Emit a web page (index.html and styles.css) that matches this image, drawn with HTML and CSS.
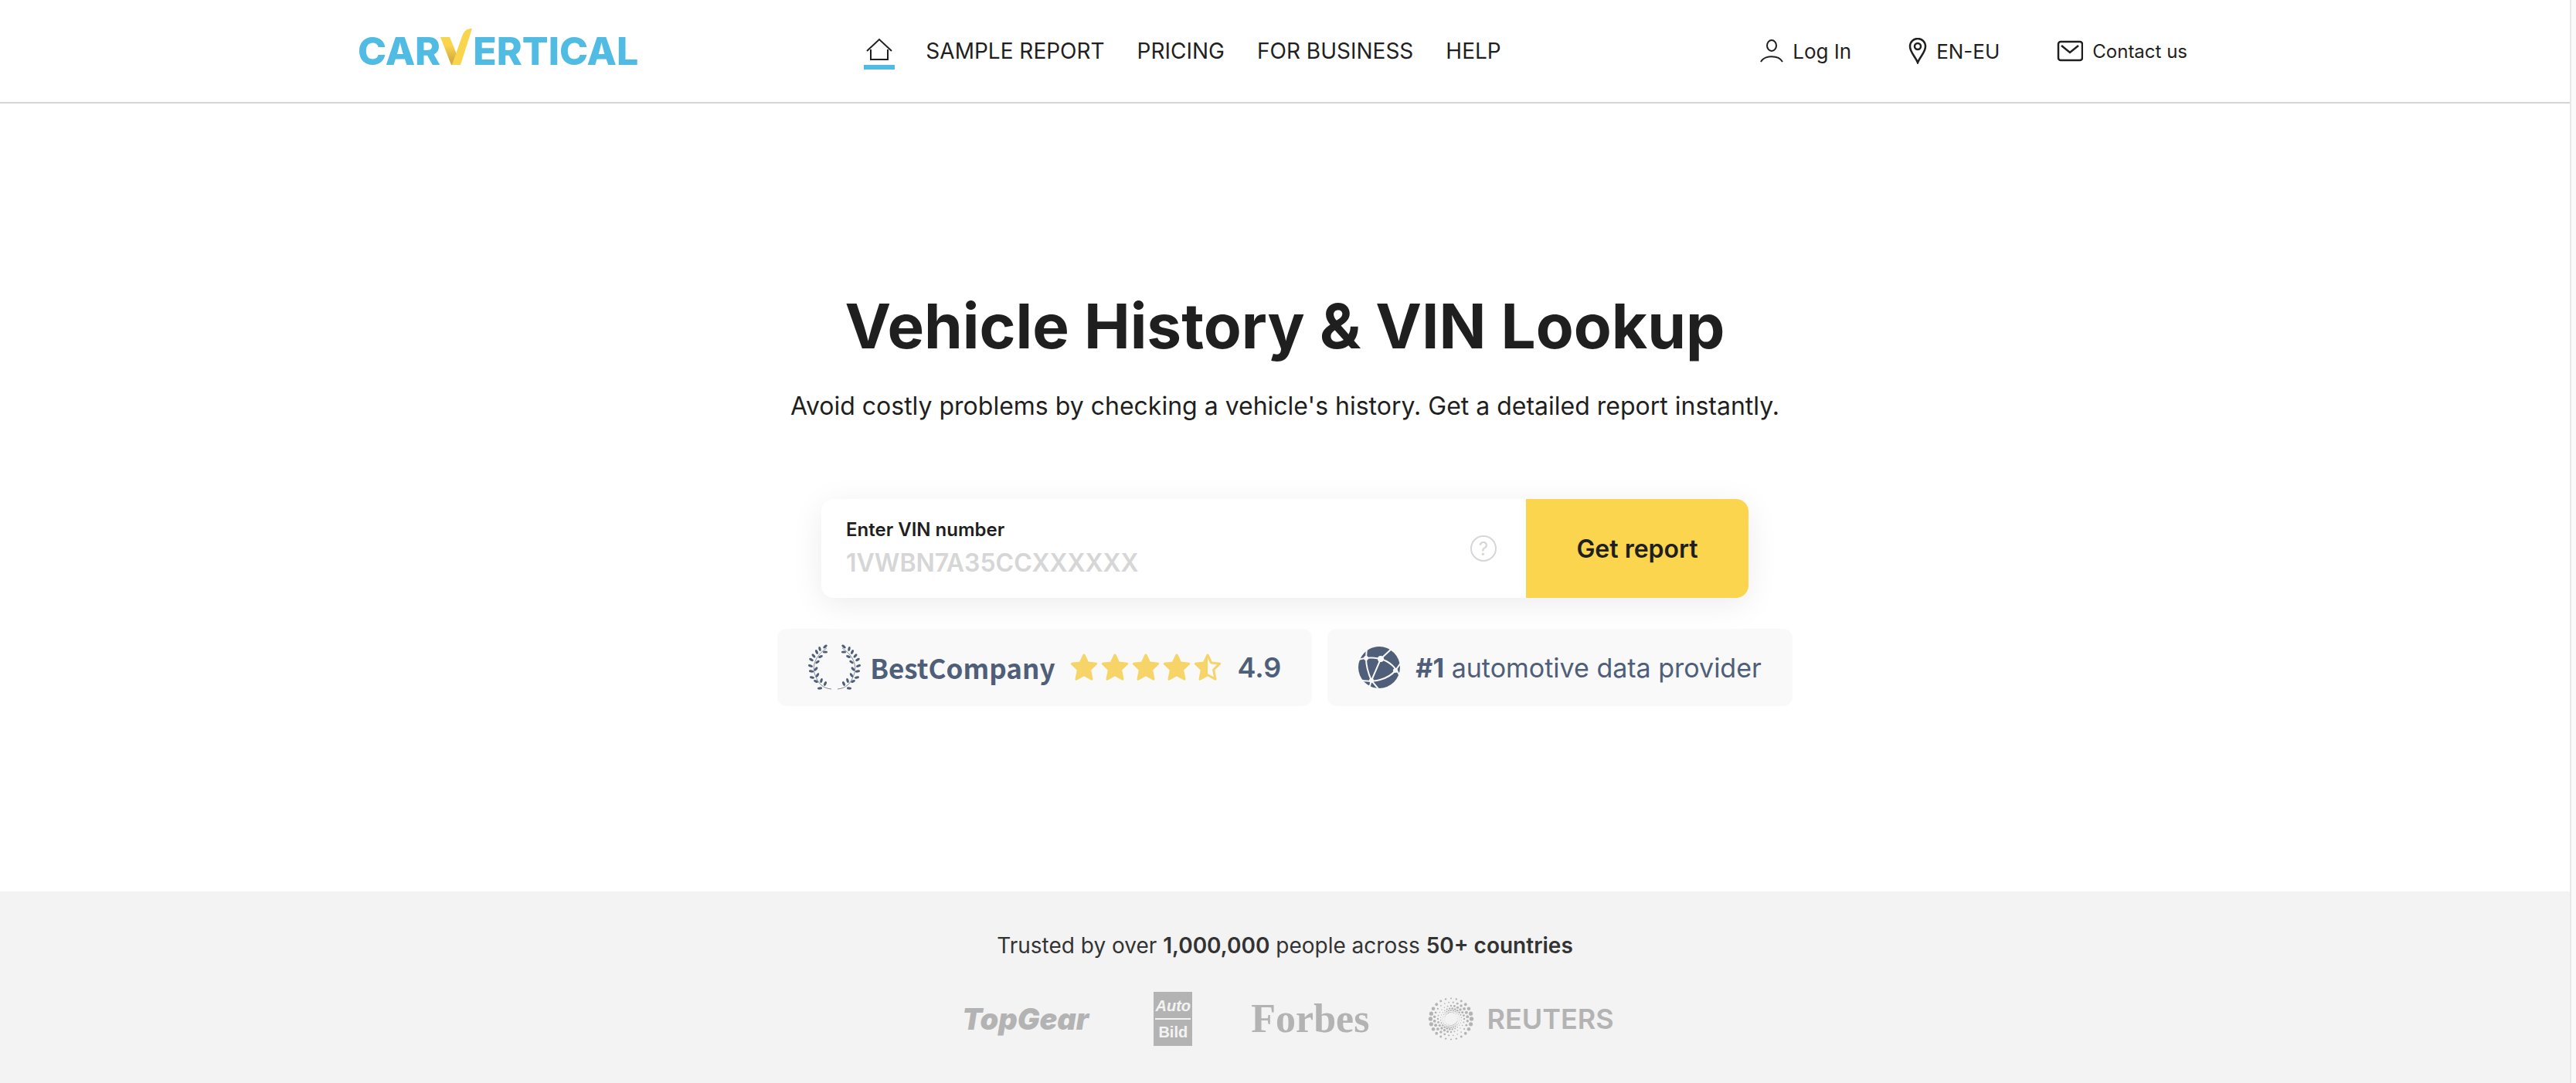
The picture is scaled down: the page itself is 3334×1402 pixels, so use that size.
FILE: index.html
```html
<!DOCTYPE html>
<html lang="en">
<head>
<meta charset="utf-8">
<meta name="viewport" content="width=device-width, initial-scale=1">
<title>Vehicle History &amp; VIN Lookup</title>
<link rel="stylesheet" href="styles.css">
</head>
<body>
<div class="page">
  <header class="header">
    <div class="header-inner">
      <a class="logo" href="#" aria-label="carVertical">
        <span>CAR</span>
        <svg class="logo-v" width="42" height="47" viewBox="0 0 42 47" aria-hidden="true">
          <defs><linearGradient id="shade" x1="0" y1="0" x2="0" y2="1"><stop offset="0.3" stop-color="#f9d54d"/><stop offset="0.8" stop-color="#d9ae3e"/></linearGradient></defs>
          <path fill="url(#shade)" d="M0 11h12l9 22-5 14h-2z"/>
          <path fill="#f9d54d" d="M15 47 28 10C31 2 35 0 41 0L26 47z"/>
        </svg>
        <span>ERTICAL</span>
      </a>
      <nav class="nav" aria-label="Main">
        <a class="home" href="#" aria-label="Home">
          <svg width="34" height="29" viewBox="0 0 34 29" fill="none" stroke="#1f1f1f" stroke-width="2" aria-hidden="true"><path d="M1 17 17 2l16 15M6 15v13h22V15"/></svg>
        </a>
        <div class="nav-links">
          <a href="#">SAMPLE REPORT</a>
          <a href="#">PRICING</a>
          <a href="#">FOR BUSINESS</a>
          <a href="#">HELP</a>
        </div>
      </nav>
      <div class="tools">
        <a href="#"><svg width="30" height="30" viewBox="0 0 30 30" fill="none" stroke="#1f1f1f" stroke-width="2" aria-hidden="true"><ellipse cx="15" cy="8" rx="6" ry="7"/><path d="M1 29c5-9 23-9 28 0"/></svg>Log In</a>
        <a href="#"><svg width="24" height="34" viewBox="0 0 24 34" fill="none" stroke="#1f1f1f" stroke-width="2.5" aria-hidden="true"><path d="M12 32C9 24 2 19 2 11a10 10 0 0 1 20 0c0 8-7 13-10 21z"/><circle cx="12" cy="11" r="4"/></svg>EN-EU</a>
        <a class="contact" href="#"><svg width="34" height="28" viewBox="0 0 34 28" fill="none" stroke="#1f1f1f" stroke-width="2.5" aria-hidden="true"><rect x="2" y="2" width="31" height="24" rx="3"/><path d="m6 7 11 9 11-9"/></svg>Contact us</a>
      </div>
    </div>
  </header>

  <main class="hero">
    <h1>Vehicle History &amp; VIN Lookup</h1>
    <p class="lead">Avoid costly problems by checking a vehicle's history. Get a detailed report instantly.</p>
    <form class="lookup">
      <div class="field">
        <div class="field-text">
          <label for="vin">Enter VIN number</label>
          <input id="vin" type="text" placeholder="1VWBN7A35CCXXXXXX">
        </div>
        <button class="help" type="button" aria-label="Where to find the VIN">?</button>
      </div>
      <button class="submit" type="submit">Get report</button>
    </form>
    <div class="badges">
      <div class="badge">
        <svg class="laurel" width="68" height="60" viewBox="0 0 68 60" fill="#4f5f7a" aria-hidden="true">
          <defs>
            <ellipse id="leaf" rx="3.1" ry="1.6"/>
            <g id="branch">
              <path d="M24 5C10 14 4 28 9 40c4 11 10 17 21 18" fill="none" stroke="#4f5f7a" stroke-width="0.7"/>
              <use href="#leaf" transform="translate(22 3) rotate(-40)"/>
              <use href="#leaf" transform="translate(15 6) rotate(80)"/>
              <use href="#leaf" transform="translate(11 10) rotate(65)"/>
              <use href="#leaf" transform="translate(7 15) rotate(50)"/>
              <use href="#leaf" transform="translate(4 20) rotate(30)"/>
              <use href="#leaf" transform="translate(3 28) rotate(20)"/>
              <use href="#leaf" transform="translate(4 35) rotate(10)"/>
              <use href="#leaf" transform="translate(5 43) rotate(15)"/>
              <use href="#leaf" transform="translate(10 48) rotate(25)"/>
              <use href="#leaf" transform="translate(15 57) rotate(-5)"/>
              <use href="#leaf" transform="translate(22 10)"/>
              <use href="#leaf" transform="translate(16 16) rotate(-25)"/>
              <use href="#leaf" transform="translate(12 23) rotate(-35)"/>
              <use href="#leaf" transform="translate(10 32) rotate(-50)"/>
              <use href="#leaf" transform="translate(12 40) rotate(-60)"/>
              <use href="#leaf" transform="translate(17 47) rotate(-75)"/>
              <use href="#leaf" transform="translate(22 51) rotate(-65)"/>
            </g>
          </defs>
          <use href="#branch"/>
          <use href="#branch" transform="translate(68 0) scale(-1 1)"/>
        </svg>
        <span class="company">BestCompany</span>
        <svg class="stars" width="196" height="36" viewBox="0 0 196 36" fill="#f6d468" stroke="#f6d468" stroke-width="3" stroke-linejoin="round" role="img" aria-label="4.5 stars">
          <defs><path id="star" d="M18 2l4.700 10 11 1.200-8.100 7.800 2.400 12.300L18 27.800l-10 5.500 2.400-12.300-8.100-7.800 11-1.200z"/></defs>
          <use href="#star"/>
          <use href="#star" x="40"/>
          <use href="#star" x="80"/>
          <use href="#star" x="120"/>
          <use href="#star" x="160" fill="none"/>
          <path d="M178 2l-4.700 10-11 1.200 8.100 7.800-2.400 12.300 10-5.500z" stroke="none"/>
        </svg>
        <span class="score">4.9</span>
      </div>
      <div class="badge">
        <svg width="54" height="54" viewBox="0 0 54 54" aria-hidden="true">
          <circle cx="27" cy="27" r="27" fill="#4f5f7a"/>
          <g fill="none" stroke="#f9f9f9" stroke-width="2">
            <path d="M0 17C10 14 20 14 29 16c11 3 21 12 25 23M11 1 10 15c0 12 3 20 7 29M29 16 17 44M29 16 44 2M0 43c20 5 39-1 48-12l7-10M17 44l-3 10M17 44l10 12"/>
          </g>
          <g fill="#f9f9f9"><circle cx="10" cy="15" r="3"/><circle cx="29" cy="16" r="4"/><circle cx="48" cy="31" r="3"/><circle cx="17" cy="44" r="3"/></g>
        </svg>
        <span class="claim"><b>#1</b> automotive data provider</span>
      </div>
    </div>
  </main>

  <section class="trusted">
    <p>Trusted by over <b>1,000,000</b> people across <b>50+ countries</b></p>
    <div class="press">
      <span class="topgear">TopGear</span>
      <span class="autobild"><i>Auto</i><span>Bild</span></span>
      <span class="forbes">Forbes</span>
      <span class="reuters">
        <svg id="reuters-dots" width="60" height="60" viewBox="-30 -30 60 60" fill="#b3b3b3" aria-hidden="true"></svg>
        REUTERS
      </span>
    </div>
  </section>
</div>
<div class="track"></div>
<script src="dots.js"></script>
</body>
</html>
```
FILE: styles.css
```css
* { box-sizing: border-box; }

body {
  margin: 0;
  display: flex;
  min-height: 100vh;
  font-family: Inter, "Liberation Sans", sans-serif;
  color: #1f1f1f;
  background: #fff;
}

a { color: inherit; text-decoration: none; }
svg { flex: none; }

.page { flex: 1; display: flex; flex-direction: column; }
.track { width: 8px; border-left: 2px solid #e8e8e8; background: #fafafa; }

/* Header */
.header { border-bottom: 2px solid #d5d5d5; }
.header-inner {
  display: flex;
  align-items: center;
  max-width: 2400px;
  height: 132px;
  margin: 0 auto;
  padding-right: 32px;
}
.logo {
  display: flex;
  align-items: baseline;
  font-size: 50px;
  line-height: 60px;
  font-weight: 800;
  color: #50bbe3;
}
.nav { display: flex; align-items: center; gap: 40px; margin-left: 292px; font-size: 28px; }
.nav-links { display: flex; gap: 42px; }
.home {
  display: flex;
  justify-content: center;
  width: 40px;
  padding: 6px 0;
  border-bottom: 6px solid #50bbe3;
}
.tools { display: flex; align-items: center; gap: 74px; margin-left: auto; font-size: 26px; }
.tools a { display: flex; align-items: center; gap: 12px; }
.tools .contact { font-size: 24px; }

/* Hero */
.hero {
  display: flex;
  flex-direction: column;
  align-items: center;
  padding: 240px 0;
}
h1 { margin: 0 0 32px; font-size: 80px; line-height: 96px; font-weight: 700; }
.lead { margin: 0 0 96px; font-size: 32px; line-height: 48px; }

.lookup {
  display: flex;
  width: 100%;
  max-width: 1200px;
  height: 128px;
  margin-bottom: 40px;
  border-radius: 16px;
  background: #fff;
  box-shadow: 0 8px 40px rgba(0, 0, 0, 0.08);
  overflow: hidden;
}
.field { flex: 1; display: flex; align-items: center; padding: 0 38px 0 32px; }
.field-text { flex: 1; display: flex; flex-direction: column; }
label { font-size: 24px; line-height: 36px; font-weight: 600; }
input {
  width: 100%;
  height: 48px;
  padding: 0;
  border: 0;
  outline: 0;
  background: none;
  font: 600 32px Inter, "Liberation Sans", sans-serif;
  color: #1f1f1f;
}
input::placeholder { color: #d6d6d6; opacity: 1; }
.help {
  width: 34px;
  height: 34px;
  padding: 0;
  border: 2px solid #d6d6d6;
  border-radius: 50%;
  background: none;
  font: 24px Inter, "Liberation Sans", sans-serif;
  color: #d6d6d6;
}
.submit {
  width: 288px;
  border: 0;
  background: #fad54d;
  font: 600 32px Inter, "Liberation Sans", sans-serif;
  color: #1f1f1f;
}

.badges { display: flex; gap: 20px; }
.badge {
  display: flex;
  align-items: center;
  height: 100px;
  padding: 0 40px;
  border-radius: 12px;
  background: #f9f9f9;
  color: #4f5f7a;
}
.company { margin: 0 20px 0 12px; font: 700 35px/56px "Noto Sans CJK SC", sans-serif; }
.score { margin-left: 20px; font-size: 36px; font-weight: 600; }
.claim { margin-left: 20px; font-size: 34px; }

/* Press */
.trusted {
  flex: 1;
  display: flex;
  flex-direction: column;
  align-items: center;
  padding: 50px 0 46px;
  background: #f3f3f3;
}
.trusted p { margin: 0 0 40px; font-size: 28px; line-height: 40px; color: #333; }
.trusted b { font-weight: 600; }
.press { display: flex; align-items: center; gap: 76px; padding-left: 8px; color: #b3b3b3; }
.topgear { margin-right: 8px; font-size: 38px; font-weight: 900; font-style: italic; }
.autobild {
  display: flex;
  flex-direction: column;
  width: 50px;
  height: 70px;
  border: 2px solid #b3b3b3;
  background: #b3b3b3;
  color: #f3f3f3;
  font: 700 20px/32px "Liberation Sans", sans-serif;
  text-align: center;
}
.autobild span { border-top: 2px solid #f3f3f3; }
.forbes { font: 700 52px/64px "Liberation Serif", serif; }
.reuters { display: flex; align-items: center; gap: 16px; font-size: 36px; font-weight: 600; }
```
FILE: dots.js
```javascript
// Draws the Reuters dot sphere: rings of dots whose size swells along a spiral.
const svg = document.getElementById("reuters-dots");
const rings = [[26.5, 2.7], [21.5, 2], [17, 1.7], [13.5, 1.4], [11, 1.1], [8.5, 0.8]];
rings.forEach(([radius, size], k) => {
  for (let i = 0; i < 24; i++) {
    const angle = ((i + (k % 2) / 2) * Math.PI) / 12;
    const dot = document.createElementNS("http://www.w3.org/2000/svg", "circle");
    dot.setAttribute("cx", radius * Math.cos(angle));
    dot.setAttribute("cy", radius * Math.sin(angle));
    dot.setAttribute("r", size * (0.7 + 0.3 * Math.cos(2 * (angle + k * 0.4))));
    svg.appendChild(dot);
  }
});
```
